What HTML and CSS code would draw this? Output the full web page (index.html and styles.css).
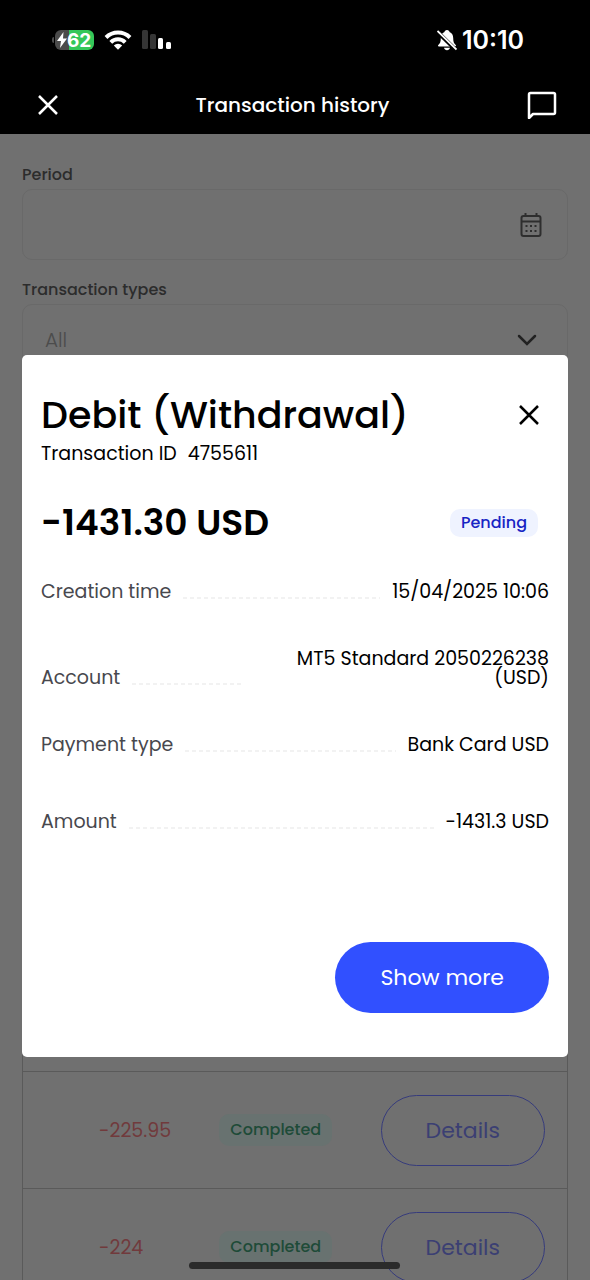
FILE: index.html
```html
<!DOCTYPE html>
<html lang="en">
<head>
<meta charset="utf-8">
<meta name="viewport" content="width=device-width, initial-scale=1">
<title>Transaction history</title>
<link rel="stylesheet" href="styles.css">
</head>
<body>
<div class="app">
  <header class="top">
    <div class="status">
      <div class="status-group">
        <div class="battery-wrap">
          <span class="battery-tip"></span>
          <div class="battery">
            <svg width="10" height="16" viewBox="0 0 10 16" aria-hidden="true"><path d="M6.500 0 0 9h4L3 16l7-9.500H6z" fill="#fff"/></svg>
            <span>62</span>
          </div>
        </div>
        <svg width="28" height="20" viewBox="0 0 28 20" fill="none" stroke="#fff" stroke-width="4" aria-hidden="true"><path d="M2 7.500a17 17 0 0 1 24 0M6.800 12.300a10.200 10.200 0 0 1 14.400 0"/><path d="M9.800 15.500a6 6 0 0 1 8.400 0L14 19.700z" fill="#fff" stroke="none"/></svg>
        <svg width="32" height="20" viewBox="0 0 32 20" aria-hidden="true"><g fill="#353535"><rect x="0" y="0" width="6" height="19" rx="1.500"/><rect x="8" y="4" width="6" height="15" rx="1.500"/></g><g fill="#fff"><rect x="16" y="8" width="5" height="11" rx="1.500"/><rect x="24" y="12" width="5" height="7" rx="1.500"/></g></svg>
      </div>
      <div class="status-clock">
        <svg width="20" height="22" viewBox="0 0 20 22" aria-hidden="true"><path d="M10 1c-1.500 0-2.500 1-2.500 2C5 4 3.800 6 3.800 9c0 4-.8 5.500-2.500 7-.6.600-.3 1.500.6 1.500h16.200c.9 0 1.200-.9.6-1.500-1.700-1.500-2.500-3-2.500-7 0-3-1.200-5-3.700-6 0-1-1-2-2.500-2zM7 18.800h6c-.3 1.500-1.500 2.500-3 2.500s-2.700-1-3-2.500z" fill="#fff"/><path d="M0 2.500 19 21" stroke="#000" stroke-width="4"/><path d="M.5 2 19.500 20.500" stroke="#fff" stroke-width="1.800"/></svg>
        <time>10:10</time>
      </div>
    </div>
    <nav class="nav">
      <button class="icon-button" aria-label="Close page"><svg width="20" height="20" viewBox="0 0 20 20" fill="none" stroke="#fff" stroke-width="2.500" aria-hidden="true"><path d="m1 1 18 18M19 1 1 19"/></svg></button>
      <h1 class="nav-title">Transaction history</h1>
      <button class="icon-button" aria-label="Open chat"><svg width="30" height="28" viewBox="0 0 30 28" fill="none" stroke="#fff" stroke-width="2.500" stroke-linejoin="round" aria-hidden="true"><path d="M2 27V3.500Q2 2 3.500 2h23Q28 2 28 3.500v18q0 1.500-1.500 1.500H6z"/></svg></button>
    </nav>
  </header>

  <main class="page">
    <div class="field">
      <label for="period">Period</label>
      <div class="control">
        <input id="period" type="text">
        <svg width="22" height="24" viewBox="0 0 22 24" fill="none" stroke="#2e2e2e" stroke-width="2" aria-hidden="true"><rect x="1.500" y="3" width="19" height="20" rx="2"/><path d="M2 8.500h18M5.500 0v3M16.500 0v3"/><path d="M5.500 13h2M10 13h2M14.500 13h2M5.500 18h2M10 18h2M14.500 18h2"/></svg>
      </div>
    </div>
    <div class="field">
      <label for="types">Transaction types</label>
      <div class="control control-select">
        <select id="types"><option>All</option></select>
        <svg width="20" height="12" viewBox="0 0 20 12" fill="none" stroke="#222" stroke-width="2.500" stroke-linecap="round" aria-hidden="true"><path d="m2 2 8 8 8-8"/></svg>
      </div>
    </div>

    <table class="history">
      <colgroup><col class="col-sum"><col class="col-state"><col></colgroup>
      <tbody>
        <tr><td colspan="3"></td></tr>
        <tr>
          <td class="sum">-225.95</td>
          <td class="state"><span class="badge badge-done">Completed</span></td>
          <td class="action"><button class="pill pill-outline">Details</button></td>
        </tr>
        <tr>
          <td class="sum">-224</td>
          <td class="state"><span class="badge badge-done">Completed</span></td>
          <td class="action"><button class="pill pill-outline">Details</button></td>
        </tr>
      </tbody>
    </table>

    <div class="overlay">
      <section class="dialog" role="dialog" aria-modal="true" aria-labelledby="dialog-title">
        <div class="dialog-head">
          <h2 id="dialog-title">Debit (Withdrawal)</h2>
          <button class="icon-button" aria-label="Close dialog"><svg width="20" height="20" viewBox="0 0 20 20" fill="none" stroke="#000" stroke-width="2.500" aria-hidden="true"><path d="m1 1 18 18M19 1 1 19"/></svg></button>
        </div>
        <p class="transaction-id"><span>Transaction ID</span><span>4755611</span></p>
        <div class="total">
          <strong>-1431.30 USD</strong>
          <span class="badge badge-pending">Pending</span>
        </div>
        <dl class="details">
          <div class="detail"><dt>Creation time</dt><dd>15/04/2025 10:06</dd></div>
          <div class="detail"><dt>Account</dt><dd>MT5 Standard 2050226238 (USD)</dd></div>
          <div class="detail"><dt>Payment type</dt><dd>Bank Card USD</dd></div>
          <div class="detail detail-last"><dt>Amount</dt><dd>-1431.3 USD</dd></div>
        </dl>
        <button class="pill pill-solid">Show more</button>
      </section>
    </div>
  </main>
  <div class="home-indicator"></div>
</div>
</body>
</html>
```
FILE: styles.css
```css
* {
  box-sizing: border-box;
}

body,
h1,
h2,
p,
dl,
dd {
  margin: 0;
}

body,
button,
input,
select {
  font-family: Poppins, Inter, "Open Sans", sans-serif;
}

svg {
  display: block;
  flex: none;
}

button {
  cursor: pointer;
}

.app {
  position: relative;
  display: flex;
  flex-direction: column;
  height: 100vh;
  overflow: hidden;
  background: #707070;
}

.top {
  flex: none;
  background: #000;
  color: #fff;
}

.status {
  display: flex;
  justify-content: space-between;
  align-items: center;
  height: 80px;
  padding: 0 66px 0 52px;
  font-family: Inter, sans-serif;
}

.status-group {
  display: flex;
  align-items: center;
  gap: 10px;
}

.battery-wrap {
  display: flex;
  align-items: center;
  gap: 1px;
}

.battery-tip {
  width: 2px;
  height: 6px;
  border-radius: 2px 0 0 2px;
  background: #4b4b4b;
}

.battery {
  display: flex;
  align-items: center;
  height: 20px;
  padding: 0 3px 0 2px;
  border-radius: 6px;
  background: linear-gradient(90deg, #4b4b4b 35%, #34c759 35%);
  font-size: 19px;
  font-weight: 700;
}

.status-clock {
  display: flex;
  align-items: center;
  gap: 5px;
  font-size: 25px;
  font-weight: 600;
}

.nav {
  display: flex;
  justify-content: space-between;
  align-items: center;
  height: 54px;
  padding: 0 33px 5px 38px;
}

.nav-title {
  font-size: 20px;
  font-weight: 500;
}

.icon-button {
  padding: 0;
  border: 0;
  background: none;
}

.page {
  position: relative;
  flex: 1;
  min-height: 0;
  padding: 27px 22px 0;
  overflow: hidden;
}

.field {
  margin-bottom: 16px;
  color: #2c2c2c;
  font-size: 16px;
  font-weight: 500;
  line-height: 28px;
}

.field label {
  display: block;
}

.control {
  display: flex;
  align-items: center;
  height: 71px;
  padding: 0 25px 0 22px;
  border: 1px solid #696969;
  border-radius: 10px;
}

.control-select {
  padding-right: 30px;
}

.control input,
.control select {
  flex: 1;
  min-width: 0;
  height: 100%;
  padding: 0;
  border: 0;
  outline: 0;
  appearance: none;
  background: none;
  color: #4c4c4c;
  font-size: 20px;
  font-weight: 300;
}

.history {
  width: 100%;
  margin-top: 579px;
  border: 1px solid #5a5a5a;
  border-collapse: collapse;
  table-layout: fixed;
}

.col-sum {
  width: 33%;
}

.col-state {
  width: 30%;
}

.history tr {
  height: 117px;
  border-bottom: 1px solid #5a5a5a;
}

.history td {
  padding: 0;
}

.history .sum {
  padding-left: 76px;
  color: #713a3c;
  font-size: 19px;
}

.history .state {
  padding-left: 17px;
}

.history .action {
  padding-right: 22px;
  text-align: right;
}

.badge {
  display: inline-block;
  padding: 0 11px;
  border-radius: 10px;
  font-size: 16px;
  font-weight: 500;
  line-height: 28px;
  white-space: nowrap;
}

.badge-done {
  background: #687270;
  color: #1e4b38;
  line-height: 32px;
}

.badge-pending {
  margin-right: 11px;
  background: #eff3ff;
  color: #1825c4;
}

.pill {
  height: 71px;
  padding: 0 45px;
  border: 0;
  border-radius: 36px;
  font-size: 22px;
  white-space: nowrap;
}

.pill-outline {
  padding: 0 44px;
  border: 1px solid #363b7c;
  background: none;
  color: #3b3f73;
}

.pill-solid {
  align-self: flex-end;
  margin-top: 111px;
  background: #3150ff;
  color: #fff;
}

.overlay {
  position: absolute;
  inset: 0;
  display: flex;
  align-items: center;
  padding: 0 22px 2px;
}

.dialog {
  display: flex;
  flex: 1;
  flex-direction: column;
  min-width: 0;
  padding: 35px 19px 44px;
  border-radius: 5px;
  background: #fff;
  color: #000;
}

.dialog-head {
  display: flex;
  justify-content: space-between;
  align-items: center;
  padding-right: 10px;
}

.dialog-head h2 {
  font-size: 38px;
  font-weight: 500;
  line-height: 50px;
}

.transaction-id {
  display: flex;
  gap: 11px;
  font-size: 19px;
  line-height: 28px;
}

.total {
  display: flex;
  justify-content: space-between;
  align-items: center;
  margin-top: 35px;
}

.total strong {
  font-size: 36px;
  font-weight: 600;
  line-height: 40px;
}

.details {
  display: flex;
  flex-direction: column;
  gap: 48px;
  margin-top: 39px;
  font-size: 19px;
  line-height: 19px;
}

.detail {
  display: flex;
  align-items: flex-end;
  gap: 12px;
}

.detail-last {
  padding-top: 10px;
}

.detail dt {
  order: 1;
  color: #48484e;
}

.detail::after {
  content: "";
  order: 2;
  flex: 1;
  height: 2px;
  margin-bottom: 2px;
  background: repeating-linear-gradient(90deg, #f2f2f2 0 4px, transparent 4px 7px);
}

.detail dd {
  order: 3;
  max-width: 58%;
  text-align: right;
}

.home-indicator {
  position: absolute;
  bottom: 11px;
  left: 50%;
  width: 211px;
  height: 7px;
  margin-left: -106px;
  border-radius: 4px;
  background: #2b2b2b;
}
```
